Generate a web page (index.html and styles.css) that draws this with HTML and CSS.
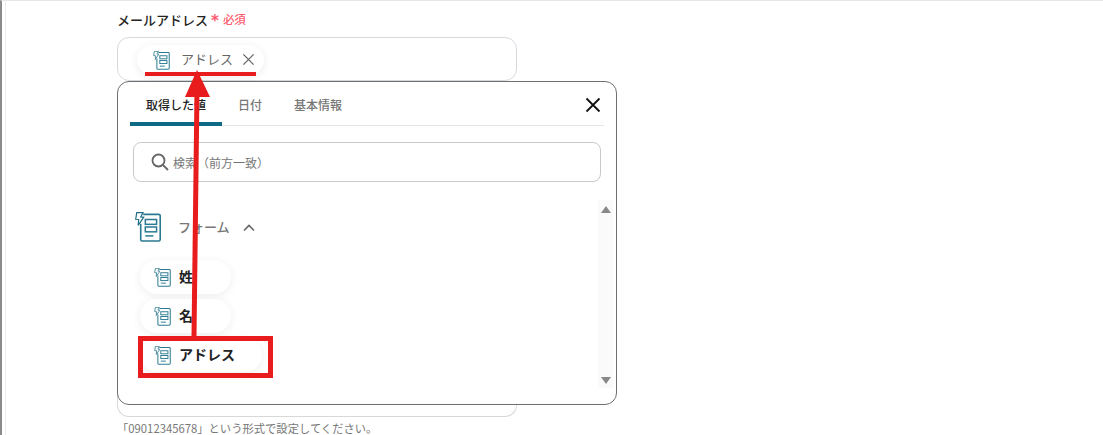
FILE: index.html
```html
<!DOCTYPE html>
<html lang="ja">
<head>
<meta charset="utf-8">
<title>メールアドレス</title>
<link rel="stylesheet" href="styles.css">
</head>
<body>
<svg class="defs" width="0" height="0" aria-hidden="true">
  <symbol id="form" viewBox="0 0 24 28">
    <path d="M7.5 2.2H22a1.4 1.4 0 0 1 1.4 1.4V25.6a1.4 1.4 0 0 1-1.4 1.4H6.6a1.4 1.4 0 0 1-1.4-1.4V11" fill="none" stroke="#2a7a92" stroke-width="1.5"/>
    <path d="M1.5.5 .5 6.8l2.8.2-.5 5.5L8 4.8 5.2 4.6 7.4.5z" fill="none" stroke="#1f6f86" stroke-width="1.1"/>
    <rect x="9.5" y="7" width="10.5" height="4.5" fill="none" stroke="#2a7a92" stroke-width="1.4"/>
    <rect x="9.5" y="14" width="10.5" height="4.5" fill="none" stroke="#2a7a92" stroke-width="1.4"/>
    <path d="M9.5 22.3h7.5" stroke="#2a7a92" stroke-width="1.4"/>
  </symbol>
</svg>
<div class="page">
  <main class="content">
    <div class="label-row">
      <span class="label">メールアドレス</span>
      <span class="asterisk">*</span>
      <span class="required">必須</span>
    </div>
    <div class="field">
      <span class="chip">
        <svg class="chip-icon"><use href="#form"/></svg>
        <span class="chip-text">アドレス</span>
        <svg class="chip-x" viewBox="0 0 14 14"><path d="M1.5 1.5l11 11M12.5 1.5l-11 11" stroke="#666" stroke-width="1.4" fill="none"/></svg>
      </span>
    </div>
    <div class="field-behind"></div>
    <p class="help">「09012345678」という形式で設定してください。</p>

    <section class="popup">
      <div class="tabs">
        <span class="tab tab-active">取得した値</span>
        <span class="tab">日付</span>
        <span class="tab">基本情報</span>
        <svg class="close" viewBox="0 0 16 16"><path d="M1.5 1.5l13 13M14.5 1.5l-13 13" stroke="#111" stroke-width="1.8" fill="none"/></svg>
      </div>
      <div class="search">
        <svg class="search-icon" viewBox="0 0 18 18"><circle cx="7.5" cy="7.5" r="6" fill="none" stroke="#666" stroke-width="1.8"/><path d="M12 12l5 5" stroke="#666" stroke-width="1.8"/></svg>
        <span class="search-text">検索（前方一致）</span>
      </div>
      <div class="list">
        <div class="group-head">
          <svg class="group-icon"><use href="#form"/></svg>
          <span class="group-name">フォーム</span>
          <svg class="chevron" viewBox="0 0 12 8"><path d="M1 6.5l5-5 5 5" fill="none" stroke="#666" stroke-width="1.6"/></svg>
        </div>
        <div class="item"><svg class="chip-icon"><use href="#form"/></svg><span>姓</span></div>
        <div class="item"><svg class="chip-icon"><use href="#form"/></svg><span>名</span></div>
        <div class="item item-wide"><svg class="chip-icon"><use href="#form"/></svg><span>アドレス</span></div>
      </div>
      <div class="scrollbar">
        <span class="arrow-up"></span>
        <span class="arrow-down"></span>
      </div>
    </section>

    <div class="mark-box"></div>
    <div class="mark-line"></div>
    <svg class="mark-arrow" viewBox="0 0 1103 435">
      <path d="M194 337 197 90" stroke="#e81c1c" stroke-width="5" fill="none"/>
      <path d="M197 70 185 97H210z" fill="#e81c1c"/>
    </svg>
  </main>
</div>
</body>
</html>
```
FILE: styles.css
```css
* { box-sizing: border-box; }
html, body { margin: 0; padding: 0; height: 435px; overflow: hidden; background: #fff; }
body { font-family: "Noto Sans CJK JP", "Noto Sans", sans-serif; color: #222; }
.defs { position: absolute; }

.page {
  height: 435px;
  border-top: 1px solid #e6e6e6;
  border-left: 2px solid #8a8a8a;
  box-shadow: inset 3px 0 0 #fff, inset 4px 0 0 #eee;
  padding-left: 115px;
}
.content { width: 500px; padding-top: 7px; }

.label-row { display: flex; align-items: center; height: 22px; gap: 3px; }
.label { font-size: 13px; font-weight: 500; color: #222; }
.asterisk { font-family: "DejaVu Sans", sans-serif; font-size: 15px; font-weight: 700; line-height: 22px; color: #ff5a6e; height: 22px; padding-top: 2px; }
.required { font-size: 11.5px; font-weight: 500; color: #ff5a6e; margin-left: 1px; }

.field {
  width: 400px;
  height: 44px;
  margin-top: 7px;
  padding: 7px 19px;
  border: 1px solid #d4d9de;
  border-radius: 12px;
}
.chip {
  display: flex;
  align-items: center;
  width: 127px;
  height: 30px;
  padding-left: 16px;
  background: #fff;
  border-radius: 15px;
  box-shadow: 0 2px 8px rgba(0, 0, 0, 0.08);
}
.chip-icon { width: 17px; height: 19px; flex: none; }
.chip-text { margin-left: 11px; font-size: 13px; line-height: 16px; color: #666; margin-top: -2px; }
.chip-x { width: 13px; height: 13px; margin-left: 9px; margin-top: -1px; }

.field-behind {
  width: 400px;
  height: 41px;
  margin-top: 295px;
  border: 1px solid #d8d8d8;
  border-top: none;
  border-radius: 0 0 12px 12px;
}
.help { margin: 3px 0 0; font-size: 11.3px; line-height: 16px; color: #777; white-space: nowrap; }

.popup {
  position: absolute;
  left: 117px;
  top: 81px;
  width: 500px;
  height: 324px;
  background: #fff;
  border: 1px solid #6e6e6e;
  border-radius: 12px;
}
.tabs {
  display: flex;
  align-items: center;
  height: 44px;
  margin: 0 12px;
  border-bottom: 1px solid #e4e4e4;
  position: relative;
}
.tab { font-size: 12px; color: #777; font-weight: 500; padding: 0 16px; line-height: 45px; height: 44px; }
.tab-active {
  width: 92px;
  color: #222;
  padding: 0 0 0 16px;
  border-bottom: 4px solid #0e6b85;
  border-radius: 4px 4px 0 0;
  white-space: nowrap;
}
.close { width: 16px; height: 16px; margin-left: auto; margin-right: 3px; margin-top: 3px; }

.search {
  display: flex;
  align-items: center;
  width: 468px;
  height: 40px;
  margin: 16px 0 0 15px;
  padding-left: 17px;
  border: 1px solid #c9c9c9;
  border-radius: 8px;
}
.search-icon { width: 18px; height: 18px; flex: none; }
.search-text { margin-left: 4px; font-size: 12px; color: #777; }

.list { position: absolute; left: 15px; top: 122px; }
.group-head { display: flex; align-items: center; height: 46px; }
.group-icon { width: 26px; height: 30px; flex: none; margin-left: 2px; margin-top: -1px; }
.group-name { margin-left: 17px; font-size: 13px; font-weight: 500; color: #777; margin-top: -2px; }
.chevron { width: 12px; height: 8px; margin-left: 13px; margin-top: 1px; }

.item {
  display: flex;
  align-items: center;
  width: 91px;
  height: 34px;
  margin: 0 0 5px 7px;
  padding-left: 14px;
  gap: 8px;
  font-size: 14px;
  font-weight: 600;
  color: #222;
  background: #fff;
  border-radius: 17px;
  box-shadow: 0 2px 10px rgba(0, 0, 0, 0.07);
}
.item span { margin-top: -2px; }
.group-head + .item { margin-top: 10px; }
.item-wide { width: 122px; }

.scrollbar {
  position: absolute;
  right: 3px;
  top: 118px;
  width: 15px;
  height: 188px;
  background: #fafafa;
  display: flex;
  flex-direction: column;
  justify-content: space-between;
  align-items: center;
  padding: 6px 0 4px;
}
.arrow-up { width: 0; height: 0; border: 5px solid transparent; border-top: 0; border-bottom: 7px solid #888; }
.arrow-down { width: 0; height: 0; border: 5px solid transparent; border-bottom: 0; border-top: 7px solid #888; }

.mark-box {
  position: absolute;
  left: 138px;
  top: 336px;
  width: 135px;
  height: 42px;
  border: 5px solid #e81c1c;
}
.mark-line {
  position: absolute;
  left: 145px;
  top: 72px;
  width: 111px;
  height: 4px;
  background: #e81c1c;
}
.mark-arrow {
  position: absolute;
  left: 0;
  top: 0;
  width: 1103px;
  height: 435px;
  pointer-events: none;
}
```
